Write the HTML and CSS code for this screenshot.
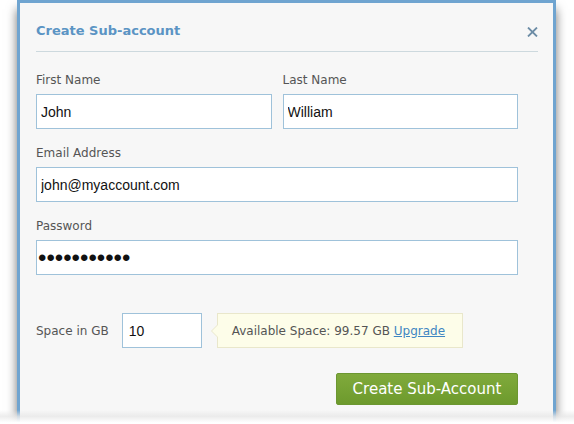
FILE: index.html
```html
<!DOCTYPE html>
<html>
<head>
<meta charset="utf-8">
<link rel="stylesheet" href="styles.css">
</head>
<body>
<div class="stage">
  <div class="dialog">
    <div class="header">
      <h1 class="title">Create Sub-account</h1>
      <span class="close" aria-label="Close">
        <svg width="11" height="10" viewBox="0 0 11 10"><path d="M1 0.5 L10 9.5 M10 0.5 L1 9.5" stroke="#6d8da6" stroke-width="1.8" fill="none"/></svg>
      </span>
    </div>
    <form class="form">
      <div class="row two">
        <div class="field">
          <label class="label">First Name</label>
          <input class="input" type="text" value="John">
        </div>
        <div class="field">
          <label class="label">Last Name</label>
          <input class="input" type="text" value="William">
        </div>
      </div>
      <div class="row">
        <div class="field">
          <label class="label">Email Address</label>
          <input class="input" type="text" value="john@myaccount.com">
        </div>
      </div>
      <div class="row">
        <div class="field">
          <label class="label">Password</label>
          <input class="input password" type="password" value="secretpass1">
        </div>
      </div>
      <div class="space-row">
        <label class="label inline">Space in GB</label>
        <input class="input small" type="text" value="10">
        <div class="tip">Available Space: 99.57 GB <a class="link" href="#">Upgrade</a></div>
      </div>
      <div class="actions">
        <button class="btn" type="button">Create Sub-Account</button>
      </div>
    </form>
  </div>
  <div class="fade"></div>
</div>
</body>
</html>
```

FILE: styles.css
```css
html, body {
  margin: 0;
  padding: 0;
  background: #ffffff;
  overflow: hidden;
  height: 424px;
}
.stage {
  position: relative;
  height: 424px;
  padding: 0 18px 0 17px;
  overflow: hidden;
}
.dialog {
  box-sizing: border-box;
  width: 539px;
  height: 440px;
  background: #f7f7f7;
  border: 3px solid #6fa4d0;
  border-bottom: none;
  box-shadow: 0 9px 10px rgba(0, 0, 0, 0.55);
  font-family: "DejaVu Sans", Verdana, sans-serif;
}
.header {
  display: flex;
  align-items: center;
  justify-content: space-between;
  margin: 0 15px 0 16px;
  padding: 18px 0 10px;
  border-bottom: 1px solid #cdd9de;
}
.title {
  margin: 0;
  font-size: 13px;
  line-height: 20px;
  font-weight: bold;
  color: #5b94c4;
}
.close {
  display: flex;
  width: 11px;
  height: 10px;
  margin-top: 1px;
}
.form {
  padding: 19px 35px 0 16px;
}
.row {
  display: flex;
  gap: 11px;
  margin-bottom: 15px;
}
.field {
  flex: 1;
  display: flex;
  flex-direction: column;
}
.label {
  display: block;
  font-size: 12px;
  line-height: 18px;
  color: #555555;
  margin-bottom: 5px;
}
.input {
  box-sizing: border-box;
  height: 35px;
  margin: 0;
  border: 1px solid #9fc2da;
  background: #ffffff;
  padding: 0 4px;
  font-family: "Liberation Sans", Arial, sans-serif;
  font-size: 14px;
  color: #111111;
  outline: none;
  width: 100%;
}
.password {
  font-size: 24px;
  padding-left: 1px;
  letter-spacing: 0;
}
.space-row {
  display: flex;
  align-items: center;
  margin-top: 38px;
}
.label.inline {
  margin: 0 13px 0 0;
}
.input.small {
  width: 80px;
  padding-left: 6px;
}
.tip {
  position: relative;
  box-sizing: border-box;
  height: 35px;
  display: flex;
  align-items: center;
  margin-left: 15px;
  padding: 0 14px 0 14px;
  width: 246px;
  background: #fdfde9;
  border: 1px solid #e9e7cb;
  font-size: 12px;
  color: #555555;
  white-space: pre;
}
.tip::before {
  content: "";
  position: absolute;
  left: -7px;
  top: 10px;
  width: 0;
  height: 0;
  border-top: 7px solid transparent;
  border-bottom: 7px solid transparent;
  border-right: 7px solid #e9e7cb;
}
.tip::after {
  content: "";
  position: absolute;
  left: -6px;
  top: 11px;
  width: 0;
  height: 0;
  border-top: 6px solid transparent;
  border-bottom: 6px solid transparent;
  border-right: 6px solid #fdfde9;
}
.link {
  color: #3f86c2;
  text-decoration: underline;
}
.actions {
  display: flex;
  justify-content: flex-end;
  margin-top: 25px;
}
.btn {
  box-sizing: border-box;
  width: 182px;
  height: 32px;
  margin: 0;
  border: 1px solid #6c9731;
  border-radius: 2px;
  background: linear-gradient(#80aa3c, #6d9a2d);
  color: #ffffff;
  font-family: "DejaVu Sans", Verdana, sans-serif;
  font-size: 15px;
  padding: 0;
}
.fade {
  position: absolute;
  left: 0;
  right: 0;
  bottom: 0;
  height: 14px;
  background: linear-gradient(rgba(235, 235, 235, 0) 0%, rgba(232, 232, 232, 0.8) 45%, #ffffff 90%, #ffffff 100%);
}
```
